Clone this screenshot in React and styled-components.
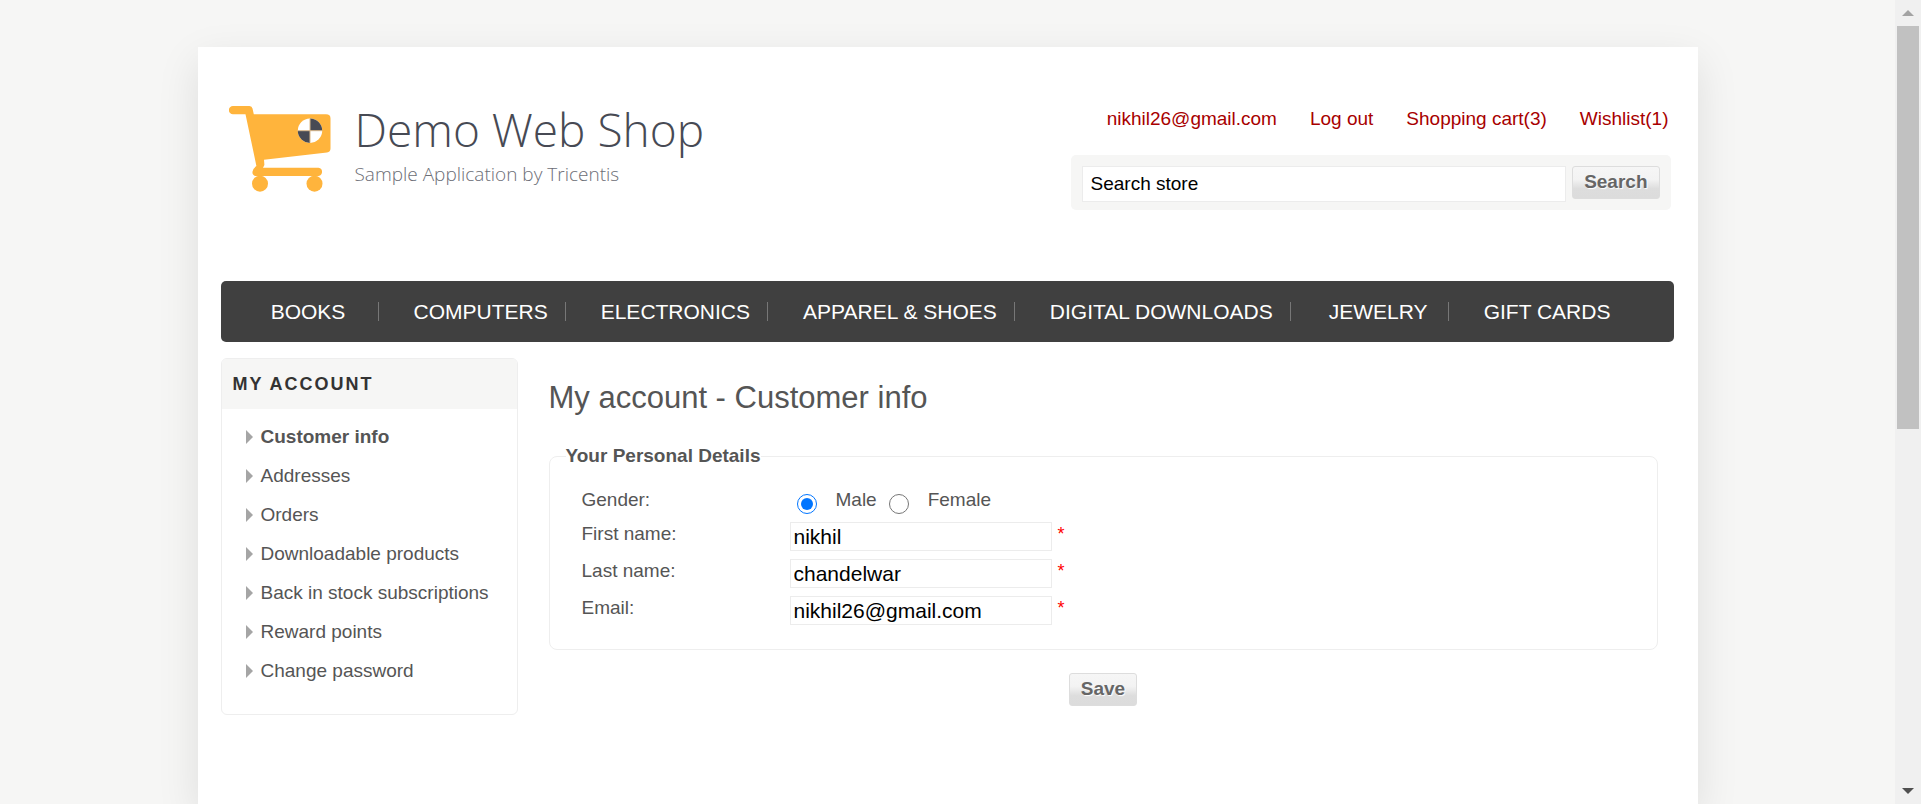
import React from "react";
import styled, { createGlobalStyle } from "styled-components";

const GlobalStyle = createGlobalStyle`
  *, *::before, *::after { box-sizing: border-box; }
  body {
    margin: 0;
    background: #f6f6f5;
    color: #555;
    font-family: "Liberation Sans", Arial, sans-serif;
    font-size: 19px;
    line-height: 24px;
  }
  a { color: inherit; text-decoration: none; }
  ul { margin: 0; padding: 0; list-style: none; }
`;

const Viewport = styled.div`
  display: flex;
  height: 100vh;
  overflow: hidden;
`;

const Page = styled.div`
  flex: 1;
  min-width: 0;
  display: flex;
  justify-content: center;
  align-items: stretch;
  padding-top: 47px;
`;

const Card = styled.div`
  width: 100%;
  max-width: 1500px;
  padding: 0 24px 0 23px;
  background: #fff;
  box-shadow: 0 14px 40px rgba(0, 0, 0, 0.1);
`;

const Header = styled.header`
  display: flex;
  justify-content: space-between;
  align-items: flex-start;
  padding: 59px 3px 71px 8px;
`;

const LogoLink = styled.a`
  display: flex;
  gap: 24px;
  color: #474a54;
  font-family: "Open Sans", sans-serif;
  font-weight: 300;
`;

const LogoName = styled.div`
  font-size: 46px;
  line-height: 46px;
`;

const LogoTagline = styled.div`
  margin-top: 10px;
  font-size: 19px;
  line-height: 24px;
  color: #6c6e76;
`;

const HeaderTools = styled.div`
  width: 600px;
  padding-top: 1px;
`;

const HeaderLinks = styled.ul`
  display: flex;
  justify-content: flex-end;
  gap: 33px;
  padding-right: 2px;
  color: #a80000;
`;

const SearchBox = styled.form`
  display: flex;
  align-items: flex-start;
  gap: 6px;
  margin-top: 24px;
  padding: 11px;
  height: 55px;
  border-radius: 5px;
  background: #f6f6f5;
`;

const TextInput = styled.input`
  width: 262px;
  height: 29px;
  padding: 0 3px;
  border: 1px solid #ececec;
  background: #fff;
  color: #000;
  font: inherit;
  font-size: 21px;
`;

const SearchInput = styled(TextInput)`
  flex: 1;
  min-width: 0;
  height: 36px;
  padding: 0 8px;
  font-size: 19px;
`;

const Button = styled.button`
  height: 33px;
  padding: 0 11px 2px;
  border: 1px solid #ddd;
  border-radius: 3px;
  background: linear-gradient(#f6f6f6 0%, #f3f3f3 40%, #ddd 70%, #dcdcdc 100%);
  color: #666;
  font: inherit;
  font-weight: bold;
  line-height: 24px;
  text-shadow: 1px 1px 1px #fff;
`;

const Nav = styled.nav`
  display: flex;
  height: 61px;
  border-radius: 5px;
  background: #404040;
`;

const NavList = styled.ul`
  display: flex;
`;

const NavItem = styled.li`
  display: flex;
  align-items: center;
  justify-content: center;
  min-width: 158px;
  padding: 1px 18px 0 35px;
  color: #fff;
  font-size: 21px;
  white-space: nowrap;

  &:not(:last-child) {
    background: linear-gradient(#777, #777) right center / 1px 19px no-repeat;
  }
`;

const Columns = styled.div`
  display: flex;
  align-items: flex-start;
  padding-top: 16px;
`;

const Sidebar = styled.aside`
  flex: 0 0 297px;
  border: 1px solid #eee;
  border-radius: 6px;
  overflow: hidden;
`;

const SidebarTitle = styled.h2`
  margin: 0;
  padding: 13px 11px;
  background: #f6f6f5;
  color: #333;
  font-size: 18px;
  letter-spacing: 2px;
  line-height: 24px;
`;

const SidebarList = styled.ul`
  padding: 8px 0 24px 24px;
`;

const SidebarItem = styled.li`
  display: flex;
  align-items: center;
  gap: 8px;
  height: 39px;
  font-weight: ${(p) => (p.$active ? "bold" : "normal")};
`;

const Main = styled.main`
  flex: 1;
  min-width: 0;
  padding: 22px 16px 0 31px;
`;

const Title = styled.h1`
  margin: 0 0 28px;
  font-size: 31px;
  font-weight: normal;
  line-height: 36px;
`;

const Fieldset = styled.fieldset`
  margin: 0;
  padding: 0 16px;
  border: 1px solid #eee;
  border-radius: 8px;
`;

const Legend = styled.legend`
  padding: 0;
  font-weight: bold;
`;

const Fields = styled.div`
  display: grid;
  gap: 8px;
  padding: 20px 16px 24px;
`;

const FieldRow = styled.div`
  display: grid;
  grid-template-columns: 208px 1fr;
`;

const GenderRow = styled(FieldRow)`
  height: 26px;
`;

const Field = styled.div`
  display: flex;
`;

const Required = styled.span`
  margin-left: 6px;
  color: #f00;
  font-size: 18px;
`;

const RadioLabel = styled.label`
  display: flex;
  gap: 19px;
  margin-right: 5px;
`;

const Radio = styled.input`
  width: 20px;
  height: 20px;
  margin: 6px 0 0 7px;
`;

const Actions = styled.div`
  display: flex;
  justify-content: center;
  margin-top: 23px;
`;

const ScrollTrack = styled.div`
  flex: 0 0 26px;
  display: flex;
  flex-direction: column;
  align-items: center;
  background: #f0f0f0;
`;

const ScrollEnd = styled.div`
  display: flex;
  align-items: center;
  justify-content: center;
  flex: 0 0 26px;
`;

const ScrollSpace = styled.div`
  flex: 1;
  width: 22px;
`;

const ScrollThumb = styled.div`
  height: 403px;
  background: #c1c1c1;
`;

const headerLinks = ["nikhil26@gmail.com", "Log out", "Shopping cart(3)", "Wishlist(1)"];

const categories = [
  "BOOKS",
  "COMPUTERS",
  "ELECTRONICS",
  "APPAREL & SHOES",
  "DIGITAL DOWNLOADS",
  "JEWELRY",
  "GIFT CARDS",
];

const accountLinks = [
  "Customer info",
  "Addresses",
  "Orders",
  "Downloadable products",
  "Back in stock subscriptions",
  "Reward points",
  "Change password",
];

const textFields = [
  { id: "first-name", label: "First name:", value: "nikhil" },
  { id: "last-name", label: "Last name:", value: "chandelwar" },
  { id: "email", label: "Email:", value: "nikhil26@gmail.com" },
];

const CartLogo = () => (
  <svg width="102" height="86" viewBox="0 0 102 86" fill="#ffb43c" aria-hidden="true">
    <path d="M4 0H20.500Q23 0 23.500 2.500L24.800 8.300H97Q101.500 8.300 101.500 12.500V42.500Q101.500 46 98 46.500L35 53.700L35.400 59L34 61.700H89.500A4.200 4.200 0 0 1 89.500 70H27.500Q23.400 70 23.400 66Q24 62.500 27.400 60L16.500 8.300H4A4.100 4.100 0 0 1 4 0Z" />
    <circle cx="31" cy="77.700" r="8" />
    <circle cx="85.500" cy="77.700" r="8" />
    <circle cx="81" cy="24.700" r="12.200" fill="#fff" />
    <path d="M81 24.700V12.500A12.200 12.200 0 0 1 93.200 24.700Z" fill="#474a54" />
    <path d="M81 24.700V36.900A12.200 12.200 0 0 1 68.800 24.700Z" fill="#474a54" />
    <path d="M81 12.500V36.900M68.800 24.700H93.200" stroke="#d9b88a" strokeWidth="1" fill="none" />
  </svg>
);

const Bullet = () => (
  <svg width="7" height="14" viewBox="0 0 7 14" aria-hidden="true">
    <path d="M0 0L7 7L0 14Z" fill="#a5a5a5" />
  </svg>
);

const ScrollArrow = ({ down }) => (
  <svg width="12" height="6" viewBox="0 0 12 6" aria-hidden="true">
    <path d={down ? "M0 0H12L6 6Z" : "M0 6H12L6 0Z"} fill={down ? "#505050" : "#a3a3a3"} />
  </svg>
);

export default function App() {
  return (
    <Viewport>
      <GlobalStyle />
      <Page>
        <Card>
          <Header>
            <LogoLink href="#home">
              <CartLogo />
              <div>
                <LogoName>Demo Web Shop</LogoName>
                <LogoTagline>Sample Application by Tricentis</LogoTagline>
              </div>
            </LogoLink>
            <HeaderTools>
              <HeaderLinks>
                {headerLinks.map((text) => (
                  <li key={text}>
                    <a href="#header">{text}</a>
                  </li>
                ))}
              </HeaderLinks>
              <SearchBox onSubmit={(e) => e.preventDefault()}>
                <SearchInput type="text" aria-label="Search store" defaultValue="Search store" />
                <Button type="submit">Search</Button>
              </SearchBox>
            </HeaderTools>
          </Header>

          <Nav>
            <NavList>
              {categories.map((name) => (
                <NavItem key={name}>
                  <a href="#category">{name}</a>
                </NavItem>
              ))}
            </NavList>
          </Nav>

          <Columns>
            <Sidebar>
              <SidebarTitle>MY ACCOUNT</SidebarTitle>
              <SidebarList>
                {accountLinks.map((name, i) => (
                  <SidebarItem key={name} $active={i === 0}>
                    <Bullet />
                    <a href="#account">{name}</a>
                  </SidebarItem>
                ))}
              </SidebarList>
            </Sidebar>

            <Main>
              <Title>My account - Customer info</Title>
              <form onSubmit={(e) => e.preventDefault()}>
                <Fieldset>
                  <Legend>Your Personal Details</Legend>
                  <Fields>
                    <GenderRow role="radiogroup" aria-labelledby="gender-label">
                      <span id="gender-label">Gender:</span>
                      <Field>
                        <RadioLabel>
                          <Radio type="radio" name="gender" defaultChecked />
                          Male
                        </RadioLabel>
                        <RadioLabel>
                          <Radio type="radio" name="gender" />
                          Female
                        </RadioLabel>
                      </Field>
                    </GenderRow>
                    {textFields.map(({ id, label, value }) => (
                      <FieldRow key={id}>
                        <label htmlFor={id}>{label}</label>
                        <Field>
                          <TextInput id={id} type="text" defaultValue={value} />
                          <Required>*</Required>
                        </Field>
                      </FieldRow>
                    ))}
                  </Fields>
                </Fieldset>
                <Actions>
                  <Button type="submit">Save</Button>
                </Actions>
              </form>
            </Main>
          </Columns>
        </Card>
      </Page>

      <ScrollTrack aria-hidden="true">
        <ScrollEnd>
          <ScrollArrow />
        </ScrollEnd>
        <ScrollSpace>
          <ScrollThumb />
        </ScrollSpace>
        <ScrollEnd>
          <ScrollArrow down />
        </ScrollEnd>
      </ScrollTrack>
    </Viewport>
  );
}
